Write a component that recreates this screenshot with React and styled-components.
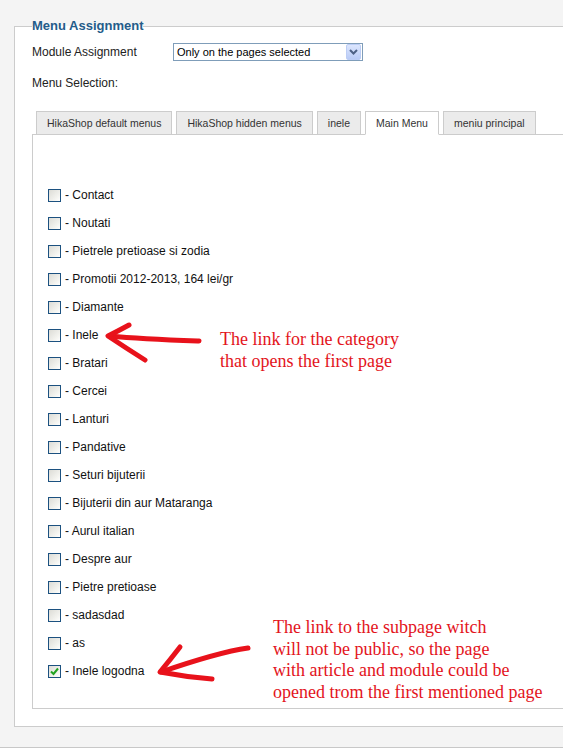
import styled, { createGlobalStyle } from 'styled-components';

const GlobalStyle = createGlobalStyle`
  html, body {
    margin: 0;
    padding: 0;
    background: #ffffff;
    overflow: hidden;
  }
  body {
    font-family: "Liberation Sans", Arial, sans-serif;
  }
`;

const menuTabs = [
  'HikaShop default menus',
  'HikaShop hidden menus',
  'inele',
  'Main Menu',
  'meniu principal',
];

const menuItems = [
  'Contact',
  'Noutati',
  'Pietrele pretioase si zodia',
  'Promotii 2012-2013, 164 lei/gr',
  'Diamante',
  'Inele',
  'Bratari',
  'Cercei',
  'Lanturi',
  'Pandative',
  'Seturi bijuterii',
  'Bijuterii din aur Mataranga',
  'Aurul italian',
  'Despre aur',
  'Pietre pretioase',
  'sadasdad',
  'as',
  'Inele logodna',
];

const App = () => {
  return (
    <Page>
      <GlobalStyle />
      <Fieldset>
        <Legend>Menu Assignment</Legend>

        <FieldRow>
          <FieldLabel>Module Assignment</FieldLabel>
          <SelectBox>
            <SelectText>Only on the pages selected</SelectText>
            <SelectButton>
              <svg width="9" height="6" viewBox="0 0 9 6">
                <path d="M1 1 L4.5 4.5 L8 1" fill="none" stroke="#4d6185" strokeWidth="2" />
              </svg>
            </SelectButton>
          </SelectBox>
        </FieldRow>

        <SectionLabel>Menu Selection:</SectionLabel>

        <TabBar>
          {menuTabs.map(t => (
            <Tab key={t} $active={t === 'Main Menu'}>{t}</Tab>
          ))}
        </TabBar>

        <TabPanel>
          {menuItems.map(item => (
            <ItemRow key={item}>
              <CheckBox $checked={item === 'Inele logodna'}>
                {item === 'Inele logodna' && (
                  <svg width="9" height="9" viewBox="0 0 9 9">
                    <path d="M1 4.5 L3.5 7 L8 1.5" fill="none" stroke="#22a322" strokeWidth="2" />
                  </svg>
                )}
              </CheckBox>
              <ItemText>- {item}</ItemText>
            </ItemRow>
          ))}
        </TabPanel>
      </Fieldset>

      {/* hand drawn arrows on top of the form */}
      <Scribble width="563" height="753" viewBox="0 0 563 753">
        <g fill="none" stroke="#e8121b" strokeWidth="5" strokeLinecap="round" strokeLinejoin="round">
          <path d="M199 341 C 170 340, 140 339, 110 336" />
          <path d="M129 325 Q 118 331, 108 336 Q 126 348, 145 360" />
          <path d="M248 648 C 220 652, 190 662, 161 672" />
          <path d="M180 647 Q 170 660, 160 672 Q 186 677, 212 679" />
        </g>
      </Scribble>

      <Note $left={220} $top={328} $lh={22}>
        The link for the category<br />
        that opens the first page
      </Note>
      <Note $left={273} $top={617} $lh={21.7}>
        The link to the subpage witch<br />
        will not be public, so the page<br />
        with article and module could be<br />
        opened trom the first mentioned page
      </Note>
    </Page>
  );
};

export default App;

/* ============ styles ============ */
const Page = styled.div`
  position: relative;
  background: #f4f4f4;
  padding: 18px 0 20px 14px;
  border-bottom: 1px solid #c8c8c8;
  overflow: hidden;
`;

const Fieldset = styled.fieldset`
  margin: 0;
  width: 620px;
  padding: 0 0 17px 17px;
  border: 1px solid #cccccc;
  background: #ffffff;
  display: flex;
  flex-direction: column;
`;

const Legend = styled.legend`
  padding: 0;
  font-size: 13px;
  font-weight: 700;
  line-height: 16px;
  color: #245c8a;
`;

const FieldRow = styled.div`
  display: flex;
  align-items: center;
  margin-top: 9px;
  height: 18px;
`;

const FieldLabel = styled.span`
  width: 141px;
  font-size: 12px;
  color: #222;
`;

const SelectBox = styled.div`
  box-sizing: border-box;
  width: 190px;
  height: 18px;
  border: 1px solid #7f9db9;
  display: flex;
  align-items: center;
  justify-content: space-between;
  background: #fff;
`;

const SelectText = styled.span`
  font-size: 11px;
  padding-left: 3px;
  color: #000;
`;

const SelectButton = styled.span`
  box-sizing: border-box;
  width: 15px;
  height: 16px;
  margin-right: 1px;
  display: flex;
  align-items: center;
  justify-content: center;
  border: 1px solid #bccdf5;
  border-radius: 2px;
  background: linear-gradient(#dce6fd, #b9cbf6);
`;

const SectionLabel = styled.div`
  font-size: 12px;
  color: #222;
  margin-top: 15px;
  line-height: 14px;
`;

const TabBar = styled.div`
  display: flex;
  gap: 4px;
  margin-top: 21px;
  padding-left: 4px;
  position: relative;
  z-index: 1;
  margin-bottom: -1px;
`;

const Tab = styled.div`
  box-sizing: border-box;
  height: 24px;
  padding: 0 10px;
  display: flex;
  align-items: center;
  font-size: 10.5px;
  color: #333;
  border: 1px solid #cccccc;
  border-bottom: 1px solid ${p => (p.$active ? '#ffffff' : '#cccccc')};
  background: ${p => (p.$active ? '#ffffff' : '#ebebeb')};
`;

const TabPanel = styled.div`
  border: 1px solid #cccccc;
  border-right: none;
  padding: 46px 0 23px 15px;
  display: flex;
  flex-direction: column;
`;

const ItemRow = styled.div`
  height: 28px;
  display: flex;
  align-items: center;
  gap: 4px;
`;

const CheckBox = styled.span`
  box-sizing: border-box;
  width: 13px;
  height: 13px;
  border: 1px solid #1c5180;
  background: linear-gradient(135deg, #dcdcd6 0%, #f4f4f0 70%, #ffffff 100%);
  display: flex;
  align-items: center;
  justify-content: center;
`;

const ItemText = styled.span`
  font-size: 12px;
  color: #111;
`;

const Scribble = styled.svg`
  position: absolute;
  left: 0;
  top: 0;
  pointer-events: none;
`;

const Note = styled.div`
  position: absolute;
  left: ${p => p.$left}px;
  top: ${p => p.$top}px;
  font-family: "Liberation Serif", "Times New Roman", serif;
  font-size: 18px;
  line-height: ${p => p.$lh}px;
  color: #e3141c;
  white-space: nowrap;
`;
